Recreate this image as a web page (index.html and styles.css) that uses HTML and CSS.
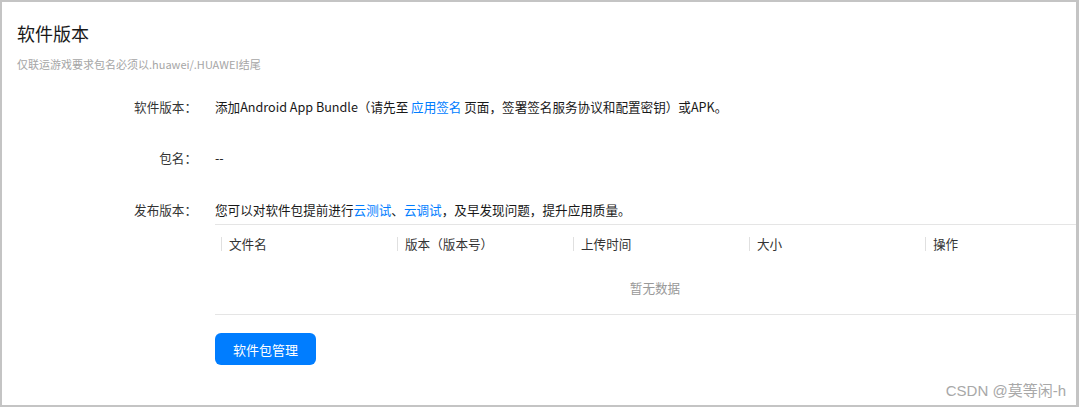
FILE: index.html
```html
<!DOCTYPE html>
<html lang="zh-CN">
<head>
  <meta charset="UTF-8" />
  <meta name="viewport" content="width=device-width, initial-scale=1.0" />
  <title>软件版本</title>
  <link rel="stylesheet" href="styles.css">
</head>
<body>
  <div class="frame">
    <div class="panel">
      <h2 class="title">软件版本</h2>
      <p class="hint">仅联运游戏要求包名必须以.huawei/.HUAWEI结尾</p>

      <div class="form">
        <div class="row">
          <div class="label">软件版本：</div>
          <div class="value">添加Android App Bundle（请先至 <a href="#">应用签名</a> 页面，签署签名服务协议和配置密钥）或APK。</div>
        </div>

        <div class="row">
          <div class="label">包名：</div>
          <div class="value">--</div>
        </div>

        <div class="row">
          <div class="label">发布版本：</div>
          <div class="value wide">
            <div>您可以对软件包提前进行<a href="#">云测试</a>、<a href="#">云调试</a>，及早发现问题，提升应用质量。</div>
            <div class="table">
              <div class="thead">
                <div class="th"><span>文件名</span></div>
                <div class="th"><span>版本（版本号）</span></div>
                <div class="th"><span>上传时间</span></div>
                <div class="th"><span>大小</span></div>
                <div class="th"><span>操作</span></div>
              </div>
              <div class="empty">暂无数据</div>
            </div>
            <button class="btn-primary">软件包管理</button>
          </div>
        </div>
      </div>
    </div>
    <div class="watermark">CSDN @莫等闲-h</div>
  </div>
</body>
</html>
```

FILE: styles.css
```css
html, body {
  margin: 0;
  padding: 0;
  background: #fff;
  font-family: "Noto Sans CJK SC", "Noto Sans", sans-serif;
  color: #191919;
}
.frame {
  position: relative;
  width: 1079px;
  height: 407px;
  box-sizing: border-box;
  border: 2px solid #c4c4c4;
  border-right-width: 3px;
  overflow: hidden;
}
.panel {
  padding: 19px 0 0 15px;
}
.title {
  margin: 0;
  font-size: 18px;
  line-height: 24px;
  font-weight: normal;
  color: #191919;
}
.hint {
  margin: 11px 0 0;
  font-size: 11px;
  line-height: 16px;
  color: #a6a6a6;
}
.form {
  margin-top: 25px;
}
.row {
  display: flex;
  font-size: 12.6px;
  line-height: 20px;
  margin-bottom: 31px;
}
.row:nth-child(2) {
  margin-bottom: 32px;
}
.label {
  width: 180px;
  flex: none;
  text-align: right;
  margin-right: 18px;
  color: #333;
}
.value {
  flex: none;
}
.value a {
  color: #007dff;
  text-decoration: none;
}
.wide {
  width: 880px;
}
.table {
  margin-top: 4px;
  border-top: 1px solid #e5e5e5;
  border-bottom: 1px solid #e5e5e5;
}
.thead {
  display: flex;
  height: 38px;
  align-items: center;
}
.th {
  flex: 1;
  padding-left: 6px;
}
.th span {
  display: inline-block;
  border-left: 1px solid #e0e0e0;
  padding-left: 7px;
  line-height: 14px;
  color: #333;
}
.empty {
  text-align: center;
  color: #999;
  height: 51px;
  line-height: 50px;
}
.btn-primary {
  margin-top: 18px;
  width: 101px;
  height: 32px;
  border: none;
  border-radius: 6px;
  background: #007dff;
  color: #fff;
  font-family: inherit;
  font-size: 13px;
  padding: 0;
}
.watermark {
  position: absolute;
  right: 10px;
  bottom: 5px;
  font-size: 15px;
  color: #a8a8a8;
  font-family: "Liberation Sans", "Noto Sans CJK SC", sans-serif;
}
```
